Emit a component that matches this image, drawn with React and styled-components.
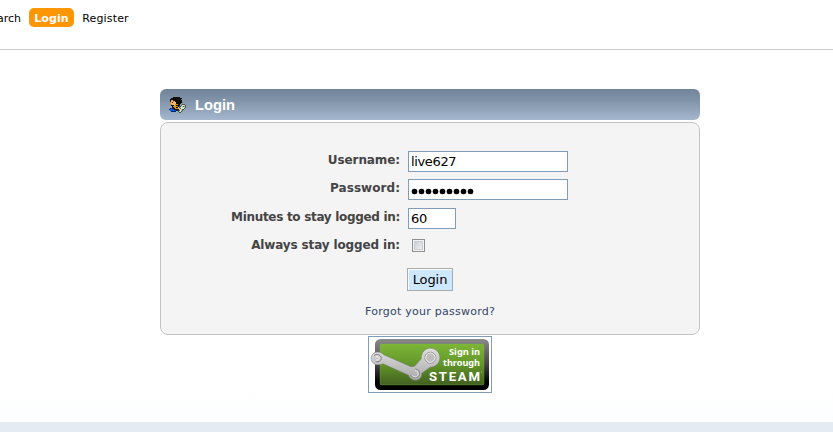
import React from "react";
import styled, { createGlobalStyle } from "styled-components";

const Global = createGlobalStyle`
  * { box-sizing: border-box; }
  html, body { margin: 0; background: #fff; }
  body { font-family: Verdana, "DejaVu Sans", sans-serif; color: #000; overflow: hidden; }
`;

const Page = styled.div`
  display: flex;
  flex-direction: column;
  width: 833px;
  height: 432px;
  overflow: hidden;
  background: linear-gradient(#fff 390px, #fcfdfe 421px);
`;

const Nav = styled.nav`
  display: flex;
  flex: none;
  gap: 8px;
  height: 50px;
  padding-top: 8px;
  border-bottom: 1px solid #ccc;
`;

const NavItem = styled.a`
  display: flex;
  justify-content: ${(p) => (p.$clipped ? "flex-end" : "center")};
  flex: none;
  width: ${(p) => p.$width}px;
  height: 19px;
  overflow: hidden;
  border-radius: 5px;
  background: ${(p) => (p.$active ? "#fd9604" : "transparent")};
  color: ${(p) => (p.$active ? "#fff" : "#000")};
  font-size: 11px;
  font-weight: ${(p) => (p.$active ? "bold" : "normal")};
  letter-spacing: ${(p) => p.$spacing || 0}px;
  line-height: 21px;
  white-space: nowrap;
`;

const Main = styled.main`
  display: flex;
  flex-direction: column;
  flex: none;
  width: 540px;
  height: 372px;
  margin-left: 160px;
  padding-top: 39px;
`;

const TitleBar = styled.h3`
  display: flex;
  align-items: center;
  flex: none;
  gap: 9px;
  height: 31px;
  margin: 0 0 2px;
  padding-left: 9px;
  border-radius: 6px;
  background: linear-gradient(#718499, #8395aa 40%, #a5b7cf);
  color: #fff;
  font: bold 14.7px/31px "Liberation Sans", Arial, sans-serif;
`;

const TitleText = styled.span`
  padding-top: 2px;
  line-height: 29px;
`;

const Panel = styled.form`
  display: flex;
  flex-direction: column;
  align-items: center;
  flex: none;
  height: 213px;
  padding-top: 28px;
  border: 1px solid #c4c4c4;
  border-radius: 8px;
  background: #f4f4f4;
`;

const Fields = styled.div`
  display: grid;
  grid-template-columns: 239px 1fr;
  grid-template-rows: 28px 29px 28px 32px;
  column-gap: 8px;
  width: 100%;
`;

const Label = styled.label`
  justify-self: end;
  color: #444;
  font-size: 12px;
  font-weight: bold;
  letter-spacing: ${(p) => p.$spacing}px;
  line-height: 18px;
  white-space: nowrap;
`;

const Input = styled.input`
  width: ${(p) => p.$width}px;
  height: 21px;
  padding: 0 2px;
  border: 1px solid #7f9db9;
  border-radius: 0;
  outline: 0;
  background: #fff;
  color: #000;
  font: 13px/19px Verdana, "DejaVu Sans", sans-serif;
  letter-spacing: ${(p) => p.$spacing || 0}px;
`;

const PasswordBox = styled.div`
  display: flex;
  align-items: center;
  gap: 2px;
  width: 160px;
  height: 21px;
  padding: 3px 0 0 3px;
  border: 1px solid #7f9db9;
  background: #fff;
`;

const Dot = styled.i`
  width: 5px;
  height: 5px;
  border-radius: 50%;
  background: #000;
  box-shadow: 0 0 0 0.3px #000;
`;

const Checkbox = styled.input.attrs({ type: "checkbox" })`
  appearance: none;
  width: 13px;
  height: 13px;
  margin: 3px 0 0 4px;
  border: 1px solid #8e8f8f;
  background: linear-gradient(135deg, #c5cad1, #f5f5f5);
  box-shadow: inset 0 0 0 1px #f4f4f4, inset 0 0 0 2px #c9cdd2;
`;

const Submit = styled.button`
  flex: none;
  width: 46px;
  height: 23px;
  padding: 0;
  border: 1px solid #aaa;
  border-radius: 0;
  box-shadow: inset 1px 1px #fff;
  background: #cde7ff;
  color: #000;
  font: 13px/19px Verdana, "DejaVu Sans", sans-serif;
  letter-spacing: -0.1px;
`;

const Forgot = styled.a`
  margin-top: 13px;
  color: #334466;
  font-size: 11px;
  letter-spacing: 0.25px;
  line-height: 16px;
  white-space: nowrap;
`;

const SteamLink = styled.a`
  align-self: center;
  flex: none;
  width: 124px;
  height: 57px;
  margin-top: 1px;
  border: 1px solid #7f9db9;
  background: #fff;
`;

const Footer = styled.footer`
  flex: none;
  height: 10px;
  background: #e5ebf3;
`;

/* 16x16 pixel art of a member holding a key; each letter selects a colour. */
const palette = {
  k: "#100e0c", o: "#d98d28", y: "#f2bd62", b: "#0758d8",
  n: "#06205c", g: "#a9c5b3", w: "#dce9d8", d: "#4c5542",
};
const pixels = [
  "....kkkkkk......",
  "..kkkkkkkkkk....",
  ".kkkkkkkkkk.....",
  ".koykkkkkkkk....",
  ".kyyoykkkkkk....",
  ".oykyyykkkkk....",
  ".oyyyyykkkk.....",
  "..oyyyookk..ddd.",
  "..kkkyokkk.dwwgd",
  "...kooookddwgdgd",
  "...kkookydgwgwgd",
  ".nbnkkooygdwwwd.",
  "nbbbbkkkkywgdd..",
  ".bbbbbbnddwgd...",
  "..nnnnn.dgwd....",
  ".........dd.....",
];

function MemberIcon() {
  return (
    <svg width="17" height="16" viewBox="0 0 16 16" preserveAspectRatio="none" shapeRendering="crispEdges" aria-hidden="true">
      {pixels.flatMap((row, y) =>
        [...row].map((c, x) =>
          c === "." ? null : <rect key={`${x}-${y}`} x={x} y={y} width="1" height="1" fill={palette[c]} />
        )
      )}
    </svg>
  );
}

function SteamBadge() {
  return (
    <svg width="122" height="55" viewBox="369 337 122 55" role="img" aria-label="Sign in through Steam">
      <defs>
        <linearGradient id="edge" x1="0" y1="0" x2="0" y2="1">
          <stop offset="0" stopColor="#8b8b8b" />
          <stop offset=".5" stopColor="#444" />
          <stop offset=".85" stopColor="#000" />
        </linearGradient>
        <linearGradient id="green" x1="0" y1="0" x2="0" y2="1">
          <stop offset="0" stopColor="#7db536" />
          <stop offset=".45" stopColor="#659a2b" />
          <stop offset="1" stopColor="#42601f" />
        </linearGradient>
        <linearGradient id="metal" x1="0" y1="0" x2="0" y2="1">
          <stop offset="0" stopColor="#dedede" />
          <stop offset="1" stopColor="#a9a9a9" />
        </linearGradient>
      </defs>
      <rect x="375" y="339" width="114" height="51" rx="5.5" fill="url(#edge)" />
      <rect x="380" y="344" width="104" height="41" rx="1.5" fill="url(#green)" stroke="#8abd4a" strokeOpacity=".5" strokeWidth=".6" />
      <path
        d="M377.5 352 C380.5 352 382.3 353.2 383.7 354.8 L411 366.7 L414.5 366.3 L421.2 359 C421.2 352.3 425 348.2 430.3 348.2 C435.7 348.2 439.8 352.5 439.8 357.5 C439.8 363 435.7 367 430 367.2 L421.8 373.2 C421.8 377.8 419 380.2 415.3 380.2 C412 380.2 409.5 377.8 408.6 375.2 L383 363.7 C381.8 364.4 379.5 364.8 377.5 364.8 C374 364.8 371.2 361.9 371.2 358.4 C371.2 354.9 374 352 377.5 352 Z"
        fill="url(#metal)" stroke="#777" strokeWidth=".5"
      />
      <circle cx="430.4" cy="357.7" r="5.5" fill="#c7c7c7" stroke="#858585" strokeWidth=".8" />
      <circle cx="430.4" cy="357.7" r="4.6" fill="#bdbdbd" stroke="#f4f4f4" strokeWidth=".9" />
      <path d="M374 355.6 C376 353.8 380 354.4 381 357 C382 360.2 379 362.6 375.6 361.6" fill="none" stroke="#808080" strokeWidth="1" />
      <path d="M376 356.8 C378 355.8 379.5 357 379.2 358.7 C378.8 360.2 377.2 360.4 376 359.8" fill="none" stroke="#efefef" strokeWidth="1" />
      <path d="M410.6 375 C412 379 418.8 378.6 419.6 374.5 C420 371 418 369 415.3 369" fill="none" stroke="#777" strokeWidth=".8" />
      <path d="M412.3 375.3 C414 378 418.2 377 418.2 374 C418.2 371.8 416.8 370.4 415 370.5" fill="none" stroke="#eee" strokeWidth=".9" />
      <g fill="#fff" fontWeight="bold" textAnchor="end">
        <text x="480" y="355" fontFamily='"Noto Sans", sans-serif' fontSize="9.2" textLength="31" lengthAdjust="spacingAndGlyphs">Sign in</text>
        <text x="480" y="366" fontFamily='"Noto Sans", sans-serif' fontSize="9.2" textLength="37" lengthAdjust="spacingAndGlyphs">through</text>
        <text x="480" y="380.7" fontFamily="Roboto, sans-serif" fontSize="13.2" textLength="51" lengthAdjust="spacing">STEAM</text>
      </g>
      <circle cx="481.5" cy="372" r=".5" fill="#c9d6b9" />
    </svg>
  );
}

export default function App() {
  return (
    <>
      <Global />
      <Page>
        <Nav>
          <NavItem $width={21} $clipped>Search</NavItem>
          <NavItem $width={45} $active $spacing={0.1}>Login</NavItem>
          <NavItem $width={47} $spacing={0.15}>Register</NavItem>
        </Nav>
        <Main>
          <TitleBar><MemberIcon /><TitleText>Login</TitleText></TitleBar>
          <Panel>
            <Fields>
              <Label $spacing={-0.1}>Username:</Label>
              <Input $width={160} $spacing={-0.35} defaultValue="live627" />
              <Label $spacing={0.05}>Password:</Label>
              <PasswordBox role="textbox" aria-label="Password">
                {Array.from({ length: 9 }, (_, i) => <Dot key={i} />)}
              </PasswordBox>
              <Label $spacing={-0.31}>Minutes to stay logged in:</Label>
              <Input $width={48} $spacing={-0.15} defaultValue="60" />
              <Label $spacing={-0.14}>Always stay logged in:</Label>
              <Checkbox />
            </Fields>
            <Submit type="button">Login</Submit>
            <Forgot>Forgot your password?</Forgot>
          </Panel>
          <SteamLink><SteamBadge /></SteamLink>
        </Main>
        <Footer />
      </Page>
    </>
  );
}
